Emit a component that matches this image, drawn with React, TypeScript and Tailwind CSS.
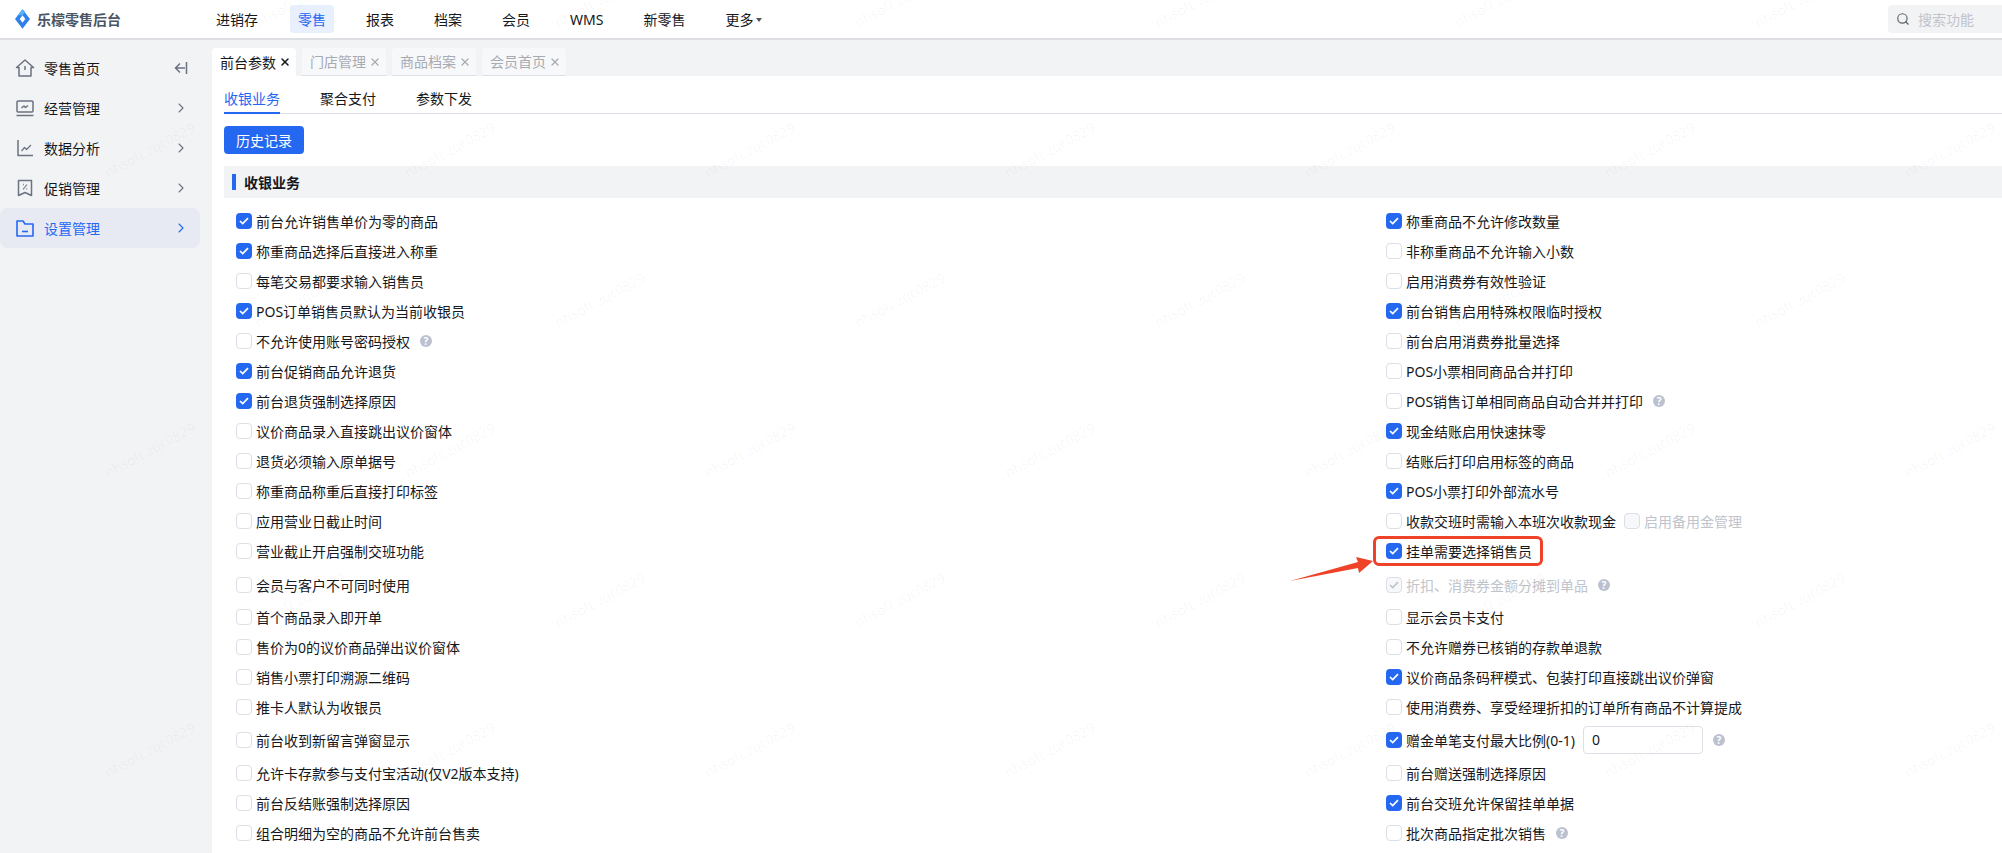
import { ChevronRight, Search, X } from "lucide-react";
import type { ReactNode } from "react";

type Option = {
  label: string;
  checked?: boolean;
  disabled?: boolean;
  help?: boolean;
  extra?: ReactNode;
};

type Row = { left: Option; right: Option; gap?: string };

const NAV = ["进销存", "零售", "报表", "档案", "会员", "WMS", "新零售"];
const TABS = ["前台参数", "门店管理", "商品档案", "会员首页"];
const SUB_TABS = ["收银业务", "聚合支付", "参数下发"];

function HomeIcon() {
  return (
    <svg width="20" height="20" viewBox="0 0 20 20" fill="none" stroke="#6b7280" strokeWidth="1.5" strokeLinejoin="round">
      <path d="M1.5 9.5 10 2l8.5 7.5H16V18H4V9.5H1.5Z" />
      <path d="M10 8v4" />
    </svg>
  );
}

function BoardIcon() {
  return (
    <svg width="20" height="20" viewBox="0 0 20 20" fill="none" stroke="#6b7280" strokeWidth="1.5" strokeLinejoin="round">
      <rect x="2" y="3" width="16" height="11" rx="1" />
      <path d="M1.5 17.5h17" />
      <path d="m6.5 10 2.5-2 1.5 1.5L13 7.5" />
    </svg>
  );
}

function ChartIcon() {
  return (
    <svg width="20" height="20" viewBox="0 0 20 20" fill="none" stroke="#6b7280" strokeWidth="1.5" strokeLinejoin="round">
      <path d="M3 2v15.5h15" />
      <path d="m6.5 13 3-3.5 2 2L16 7" strokeWidth="1.2" />
    </svg>
  );
}

function CouponIcon() {
  return (
    <svg width="20" height="20" viewBox="0 0 20 20" fill="none" stroke="#6b7280" strokeWidth="1.5" strokeLinejoin="round">
      <path d="M3.5 2.5h13v15L10 14.5l-6.5 3v-15Z" />
      <path d="m12 6.5-4 5" strokeWidth="1.1" />
      <path d="M8 6.5h.8M11.4 11h.8" strokeWidth="1.4" />
    </svg>
  );
}

function FolderIcon() {
  return (
    <svg width="20" height="20" viewBox="0 0 20 20" fill="none" stroke="#2468f2" strokeWidth="1.6" strokeLinejoin="round">
      <path d="M2 3h6l2 3h8v12H2V3Z" />
      <path d="M7 13.5h6" />
    </svg>
  );
}

const MENU = [
  { label: "零售首页", icon: <HomeIcon /> },
  { label: "经营管理", icon: <BoardIcon /> },
  { label: "数据分析", icon: <ChartIcon /> },
  { label: "促销管理", icon: <CouponIcon /> },
  { label: "设置管理", icon: <FolderIcon />, active: true },
];

function Help() {
  return (
    <span className="ml-[10px] flex h-[12px] w-[12px] items-center justify-center rounded-full bg-[#bcc1cf] text-[10px] leading-none font-bold text-white">
      ?
    </span>
  );
}

function Check({ checked, disabled }: { checked?: boolean; disabled?: boolean }) {
  const box = disabled
    ? "border border-[#dcdfe6] bg-[#f7f8fa]"
    : checked
      ? "bg-[#2468f2]"
      : "border border-[#dcdfe6] bg-white";
  return (
    <span className={`flex h-[16px] w-[16px] shrink-0 items-center justify-center rounded-[4px] ${box}`}>
      {checked ? (
        <svg width="10" height="8" viewBox="0 0 10 8" fill="none">
          <path
            d="M1 4l2.7 2.6L9 1.2"
            stroke={disabled ? "#c0c4cc" : "#ffffff"}
            strokeWidth="1.7"
          />
        </svg>
      ) : null}
    </span>
  );
}

function OptionCell({ option }: { option: Option }) {
  return (
    <div className="relative flex h-[30px] items-center">
      <Check checked={option.checked} disabled={option.disabled} />
      <span className={`ml-[4px] pt-px whitespace-nowrap ${option.disabled ? "text-[#c0c4cc]" : ""}`}>
        {option.label}
      </span>
      {option.extra}
      {option.help ? <Help /> : null}
    </div>
  );
}

const ROWS: Row[] = [
  {
    left: { label: "前台允许销售单价为零的商品", checked: true },
    right: { label: "称重商品不允许修改数量", checked: true },
  },
  {
    left: { label: "称重商品选择后直接进入称重", checked: true },
    right: { label: "非称重商品不允许输入小数" },
  },
  {
    left: { label: "每笔交易都要求输入销售员" },
    right: { label: "启用消费券有效性验证" },
  },
  {
    left: { label: "POS订单销售员默认为当前收银员", checked: true },
    right: { label: "前台销售启用特殊权限临时授权", checked: true },
  },
  {
    left: { label: "不允许使用账号密码授权", help: true },
    right: { label: "前台启用消费券批量选择" },
  },
  {
    left: { label: "前台促销商品允许退货", checked: true },
    right: { label: "POS小票相同商品合并打印" },
  },
  {
    left: { label: "前台退货强制选择原因", checked: true },
    right: { label: "POS销售订单相同商品自动合并并打印", help: true },
  },
  {
    left: { label: "议价商品录入直接跳出议价窗体" },
    right: { label: "现金结账启用快速抹零", checked: true },
  },
  {
    left: { label: "退货必须输入原单据号" },
    right: { label: "结账后打印启用标签的商品" },
  },
  {
    left: { label: "称重商品称重后直接打印标签" },
    right: { label: "POS小票打印外部流水号", checked: true },
  },
  {
    left: { label: "应用营业日截止时间" },
    right: {
      label: "收款交班时需输入本班次收款现金",
      extra: (
        <span className="ml-[8px] flex items-center gap-[4px] text-[#c0c4cc]">
          <Check disabled />
          <span className="pt-px">启用备用金管理</span>
        </span>
      ),
    },
  },
  {
    left: { label: "营业截止开启强制交班功能" },
    right: {
      label: "挂单需要选择销售员",
      checked: true,
      extra: (
        <span className="absolute top-0 left-[-13px] h-[30px] w-[170px] rounded-[6px] border-[3px] border-[#ee4328]" />
      ),
    },
    gap: "mb-[4px]",
  },
  {
    left: { label: "会员与客户不可同时使用" },
    right: { label: "折扣、消费券金额分摊到单品", checked: true, disabled: true, help: true },
    gap: "mb-[2px]",
  },
  {
    left: { label: "首个商品录入即开单" },
    right: { label: "显示会员卡支付" },
  },
  {
    left: { label: "售价为0的议价商品弹出议价窗体" },
    right: { label: "不允许赠券已核销的存款单退款" },
  },
  {
    left: { label: "销售小票打印溯源二维码" },
    right: { label: "议价商品条码秤模式、包装打印直接跳出议价弹窗", checked: true },
  },
  {
    left: { label: "推卡人默认为收银员" },
    right: { label: "使用消费券、享受经理折扣的订单所有商品不计算提成" },
    gap: "mb-[3px]",
  },
  {
    left: { label: "前台收到新留言弹窗显示" },
    right: {
      label: "赠金单笔支付最大比例(0-1)",
      checked: true,
      help: true,
      extra: (
        <span className="ml-[8px] flex h-[28px] w-[120px] items-center rounded-[4px] border border-[#dcdfe6] px-[8px]">
          0
        </span>
      ),
    },
    gap: "mb-[3px]",
  },
  {
    left: { label: "允许卡存款参与支付宝活动(仅V2版本支持)" },
    right: { label: "前台赠送强制选择原因" },
  },
  {
    left: { label: "前台反结账强制选择原因" },
    right: { label: "前台交班允许保留挂单单据", checked: true },
  },
  {
    left: { label: "组合明细为空的商品不允许前台售卖" },
    right: { label: "批次商品指定批次销售", help: true },
  },
];

// staggered watermark grid, same pitch as the app's canvas watermark
const MARKS: { x: number; y: number }[] = [];
for (let row = 0; row < 6; row++) {
  for (let col = 0; col < 8; col++) {
    MARKS.push({ x: (row % 2 === 0 ? 300 : 150) + col * 300, y: row * 150 });
  }
}

export default function App() {
  return (
    <div className="relative flex h-[853px] w-[2002px] flex-col overflow-hidden bg-[#f2f3f5] font-['Noto_Sans','Noto_Sans_CJK_SC',sans-serif] text-[14px] leading-[20px] text-[#15181d]">
      <header className="flex h-[40px] shrink-0 items-center border-b-2 border-[#dcdee2] bg-white">
        <div className="flex w-[208px] items-center pl-[15px]">
          <svg width="15" height="20" viewBox="0 0 16 21">
            <path d="M8 0 16 10.5 8 21 0 10.5Z" fill="#2f80ed" />
            <path d="M8 6.5 11 10.5 8 14.5 5 10.5Z" fill="#ffffff" />
            <path d="M8 0 3 6.5 8 6.5 11 3Z" fill="#57b1f5" />
          </svg>
          <span className="ml-[7px] pt-px font-semibold text-[#4b5563]">乐檬零售后台</span>
        </div>
        <nav className="flex gap-[24px]">
          {NAV.map((item) => (
            <span
              key={item}
              className={`rounded-[4px] px-[8px] pt-[5px] pb-[3px] ${item === "零售" ? "bg-[#e8effd] text-[#2468f2]" : ""}`}
            >
              {item}
            </span>
          ))}
          <span className="flex items-center px-[8px] pt-px">
            更多
            <span className="ml-[3px] h-0 w-0 border-x-[3.5px] border-t-[4px] border-x-transparent border-t-[#555]" />
          </span>
        </nav>
        <div className="ml-auto flex h-[28px] w-[114px] items-center rounded-l-[4px] bg-[#f2f3f5] pl-[8px] text-[#c0c4cc]">
          <Search size={14} strokeWidth={2} className="text-[#5f6368]" />
          <span className="ml-[8px] pt-px">搜索功能</span>
        </div>
      </header>

      <div className="flex min-h-0 flex-1">
        <aside className="w-[212px] shrink-0 pt-[8px]">
          {MENU.map((item, index) => (
            <div
              key={item.label}
              className={`flex h-[40px] w-[200px] items-center rounded-r-[8px] pr-[11px] pl-[15px] ${item.active ? "rounded-l-[8px] bg-[#e8eaf3] text-[#2468f2]" : ""}`}
            >
              {item.icon}
              <span className="ml-[9px] pt-px">{item.label}</span>
              {index === 0 ? (
                <svg className="mr-[1px] ml-auto" width="14" height="12" viewBox="0 0 14 12" fill="none" stroke="#6b7280" strokeWidth="1.5">
                  <path d="M12.5 0v12M11 6H2M6 1.5 1.5 6 6 10.5" />
                </svg>
              ) : (
                <ChevronRight
                  size={16}
                  strokeWidth={1.6}
                  className={`ml-auto ${item.active ? "text-[#2468f2]" : "text-[#6b7280]"}`}
                />
              )}
            </div>
          ))}
        </aside>

        <main className="min-w-0 flex-1">
          <div className="flex h-[36px] items-end gap-[6px]">
            {TABS.map((tab, index) => (
              <div
                key={tab}
                className={`flex h-[28px] w-[84px] items-center justify-between rounded-t-[4px] pr-[5px] pl-[8px] ${
                  index === 0
                    ? "bg-white"
                    : "border-b border-[#dcdfe6] bg-[#f7f8fa] text-[#a8abb2]"
                }`}
              >
                <span className="pt-px">{tab}</span>
                <X size={12} strokeWidth={index === 0 ? 3 : 2.5} />
              </div>
            ))}
          </div>

          <div className="h-[777px] bg-white pl-[12px]">
            <div className="flex h-[38px] items-end gap-[40px] border-b border-[#dcdfe6]">
              {SUB_TABS.map((tab, index) => (
                <span
                  key={tab}
                  className={`-mb-px pb-[3px] ${index === 0 ? "border-b-2 border-[#2468f2] text-[#2468f2]" : "border-b-2 border-transparent"}`}
                >
                  {tab}
                </span>
              ))}
            </div>

            <button className="mt-[12px] block h-[28px] w-[80px] rounded-[4px] bg-[#2468f2] pt-px text-center text-white">
              历史记录
            </button>

            <div className="mt-[12px] flex h-[32px] items-center bg-[#f2f3f5] pl-[8px] font-semibold">
              <span className="mr-[8px] h-[16px] w-[4px] bg-[#2468f2]" />
              <span className="pt-px">收银业务</span>
            </div>

            <div className="mt-[8px] pl-[12px]">
              {ROWS.map((row) => (
                <div key={row.left.label} className={`grid grid-cols-[1150px_1fr] ${row.gap ?? ""}`}>
                  <OptionCell option={row.left} />
                  <OptionCell option={row.right} />
                </div>
              ))}
            </div>
          </div>
        </main>
      </div>

      <svg className="pointer-events-none absolute top-[550px] left-[1285px]" width="92" height="36" viewBox="0 0 92 36">
        <path d="M5 31 73 12 71 7 88 11 74 23 73 18Z" fill="#ee4328" />
      </svg>

      <div className="pointer-events-none absolute inset-0">
        {MARKS.map((mark) => (
          <span
            key={`${mark.x}-${mark.y}`}
            className="absolute -translate-x-1/2 -translate-y-1/2 -rotate-[28deg] text-[14px] whitespace-nowrap text-black/[0.04]"
            style={{ left: mark.x, top: mark.y }}
          >
            nhsoft.zqc0829
          </span>
        ))}
      </div>
    </div>
  );
}
